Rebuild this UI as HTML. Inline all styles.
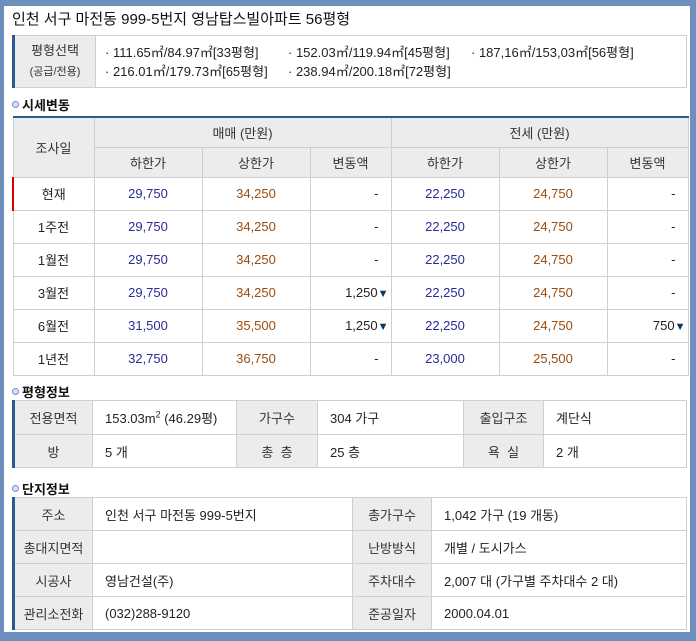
<!DOCTYPE html>
<html><head><meta charset="utf-8"><style>
*{margin:0;padding:0;box-sizing:border-box}
body{width:696px;height:641px;background:#6e8fbd;font-family:"Liberation Sans","Noto Sans CJK KR",sans-serif;font-size:13px;color:#222;position:relative;overflow:hidden}
#w{position:absolute;left:4px;top:6px;width:686px;height:626px;background:#fff}
h1{position:absolute;left:8px;top:2px;font-size:15px;font-weight:normal;color:#111}
h2{position:absolute;font-size:13px;font-weight:bold;color:#111;left:8px}
h2:before{content:"";display:inline-block;width:5px;height:5px;border:1px solid #7a8fd0;border-radius:50%;background:#dde;margin-right:3px;vertical-align:2px}
table{position:absolute;border-collapse:collapse;table-layout:fixed}
td{border:1px solid #cfcfcf;text-align:center;vertical-align:middle;padding:0}
td.h{background:#ececec;color:#333}
.b{color:#2a2a9a}.o{color:#9a4d10}
.r{text-align:right;padding-right:12px}
.l{text-align:left;padding-left:12px}
.t{font-size:11px;color:#0b3566}
</style></head><body><div id="w">
<h1>인천 서구 마전동 999-5번지 영남탑스빌아파트 56평형</h1>
<table style="left:8px;top:29px;width:675px;height:53px;border-left:3px solid #2d5a8e">
<tr><td class="h" style="width:82px;line-height:20px;font-size:13px">평형선택<br><span style="font-size:11px">(공급/전용)</span></td>
<td class="l" style="text-align:left;line-height:19px;font-size:13px;padding-left:9px">
<span style="display:inline-block;width:183px">· 111.65㎡/84.97㎡[33평형]</span><span style="display:inline-block;width:183px">· 152.03㎡/119.94㎡[45평형]</span><span>· 187,16㎡/153,03㎡[56평형]</span><br>
<span style="display:inline-block;width:183px">· 216.01㎡/179.73㎡[65평형]</span><span>· 238.94㎡/200.18㎡[72평형]</span></td></tr></table>
<h2 style="top:89px">시세변동</h2>
<table style="left:8px;top:110px;width:675px;border-top:2px solid #2d5a8e">
<colgroup><col style="width:81px"><col style="width:108px"><col style="width:108px"><col style="width:81px"><col style="width:108px"><col style="width:108px"><col style="width:81px"></colgroup>
<tr style="height:30px"><td class="h" rowspan="2">조사일</td><td class="h" colspan="3">매매 (만원)</td><td class="h" colspan="3">전세 (만원)</td></tr>
<tr style="height:30px"><td class="h">하한가</td><td class="h">상한가</td><td class="h">변동액</td><td class="h">하한가</td><td class="h">상한가</td><td class="h">변동액</td></tr>
<tr style="height:33px"><td style="border-left:2px solid #d00">현재</td><td class="b">29,750</td><td class="o">34,250</td><td class="r">-</td><td class="b">22,250</td><td class="o">24,750</td><td class="r">-</td></tr>
<tr style="height:33px"><td>1주전</td><td class="b">29,750</td><td class="o">34,250</td><td class="r">-</td><td class="b">22,250</td><td class="o">24,750</td><td class="r">-</td></tr>
<tr style="height:33px"><td>1월전</td><td class="b">29,750</td><td class="o">34,250</td><td class="r">-</td><td class="b">22,250</td><td class="o">24,750</td><td class="r">-</td></tr>
<tr style="height:33px"><td>3월전</td><td class="b">29,750</td><td class="o">34,250</td><td class="r" style="padding-right:2px">1,250<span class="t">▼</span></td><td class="b">22,250</td><td class="o">24,750</td><td class="r">-</td></tr>
<tr style="height:33px"><td>6월전</td><td class="b">31,500</td><td class="o">35,500</td><td class="r" style="padding-right:2px">1,250<span class="t">▼</span></td><td class="b">22,250</td><td class="o">24,750</td><td class="r" style="padding-right:2px">750<span class="t">▼</span></td></tr>
<tr style="height:33px"><td>1년전</td><td class="b">32,750</td><td class="o">36,750</td><td class="r">-</td><td class="b">23,000</td><td class="o">25,500</td><td class="r">-</td></tr>
</table>
<h2 style="top:376px">평형정보</h2>
<table style="left:8px;top:394px;width:675px;border-left:3px solid #2d5a8e">
<colgroup><col style="width:79px"><col style="width:144px"><col style="width:81px"><col style="width:146px"><col style="width:80px"><col></colgroup>
<tr style="height:34px"><td class="h">전용면적</td><td class="l">153.03m<sup style="font-size:9px">2</sup> (46.29평)</td><td class="h">가구수</td><td class="l">304 가구</td><td class="h">출입구조</td><td class="l">계단식</td></tr>
<tr style="height:33px"><td class="h">방</td><td class="l">5 개</td><td class="h">총 &nbsp;층</td><td class="l">25 층</td><td class="h">욕 &nbsp;실</td><td class="l">2 개</td></tr>
</table>
<h2 style="top:473px">단지정보</h2>
<table style="left:8px;top:491px;width:675px;border-left:3px solid #2d5a8e">
<colgroup><col style="width:79px"><col style="width:260px"><col style="width:79px"><col></colgroup>
<tr style="height:33px"><td class="h">주소</td><td class="l">인천 서구 마전동 999-5번지</td><td class="h">총가구수</td><td class="l">1,042 가구 (19 개동)</td></tr>
<tr style="height:33px"><td class="h">총대지면적</td><td class="l"></td><td class="h">난방방식</td><td class="l">개별 / 도시가스</td></tr>
<tr style="height:33px"><td class="h">시공사</td><td class="l">영남건설(주)</td><td class="h">주차대수</td><td class="l">2,007 대 (가구별 주차대수 2 대)</td></tr>
<tr style="height:33px"><td class="h">관리소전화</td><td class="l">(032)288-9120</td><td class="h">준공일자</td><td class="l">2000.04.01</td></tr>
</table>
</div></body></html>
